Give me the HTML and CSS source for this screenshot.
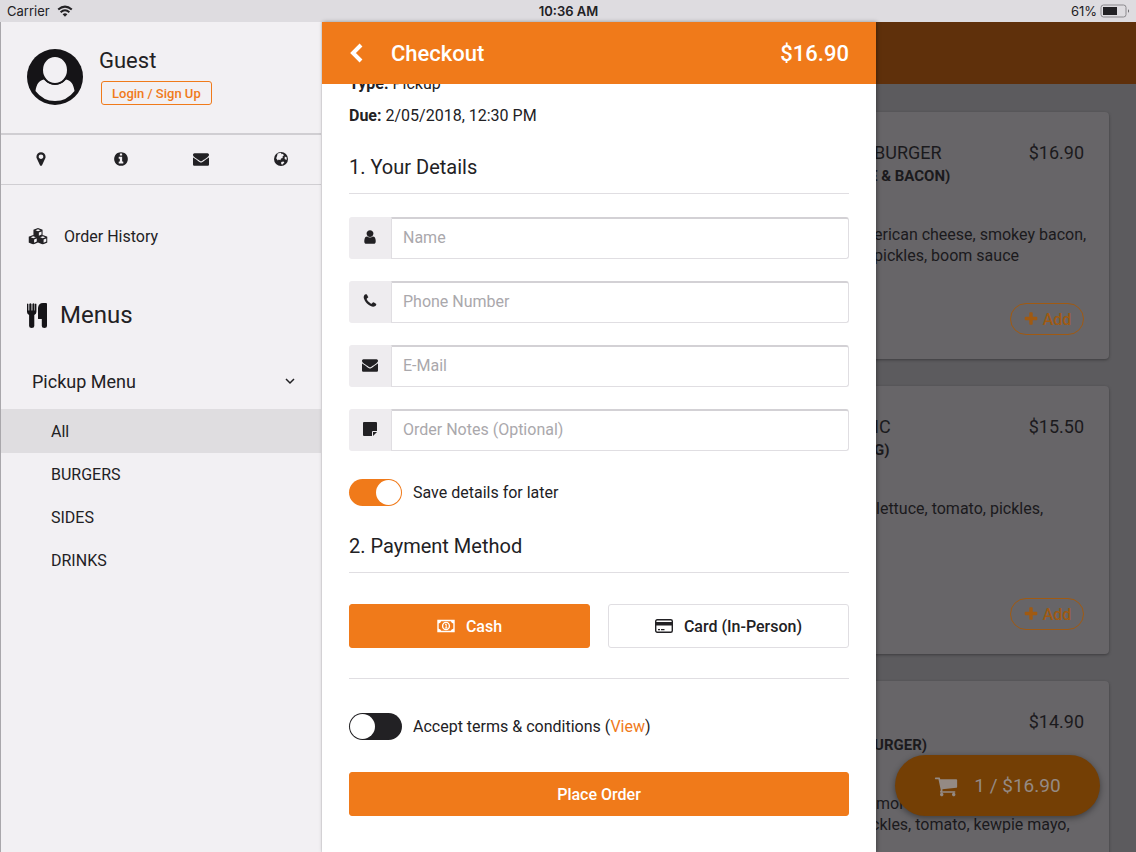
FILE: index.html
```
<!DOCTYPE html>
<html lang="en">
<head>
<meta charset="utf-8">
<meta name="viewport" content="width=device-width, initial-scale=1">
<title>Checkout</title>
<link rel="stylesheet" href="styles.css">
</head>
<body>
<svg class="sprite" aria-hidden="true">
  <symbol id="marker" viewBox="0 0 1792 1792"><path d="M1152 640q0-106-75-181t-181-75-181 75-75 181 75 181 181 75 181-75 75-181zm256 0q0 109-33 179l-364 774q-16 33-47.5 52t-67.5 19-67.5-19-46.5-52l-365-774q-33-70-33-179 0-212 150-362t362-150 362 150 150 362z"/></symbol>
  <symbol id="info" viewBox="0 0 1792 1792"><path d="M1152 1376v-160q0-14-9-23t-23-9h-96v-512q0-14-9-23t-23-9h-320q-14 0-23 9t-9 23v160q0 14 9 23t23 9h96v320h-96q-14 0-23 9t-9 23v160q0 14 9 23t23 9h448q14 0 23-9t9-23zm-128-896v-160q0-14-9-23t-23-9h-192q-14 0-23 9t-9 23v160q0 14 9 23t23 9h192q14 0 23-9t9-23zm640 416q0 209-103 385.5t-279.5 279.5-385.5 103-385.5-103-279.5-279.5-103-385.5 103-385.5 279.5-279.5 385.5-103 385.5 103 279.5 279.5 103 385.5z"/></symbol>
  <symbol id="mail" viewBox="0 0 1792 1792"><path d="M1792 710v794q0 66-47 113t-113 47h-1472q-66 0-113-47t-47-113v-794q44 49 101 87 362 246 497 345 57 42 92.5 65.5t94.5 48 110 24.5h2q51 0 110-24.5t94.5-48 92.5-65.5q170-123 498-345 57-39 100-87zm0-294q0 79-49 151t-122 123q-376 261-468 325-10 7-42.5 31t-54 38.5-52 32.5-57.5 27-50 9h-2q-23 0-50-9t-57.5-27-52-32.5-54-38.5-42.5-31q-91-64-262-182.5t-205-142.5q-62-42-117-115.5t-55-136.5q0-78 41.5-130t118.5-52h1472q65 0 112.5 47t47.5 113z"/></symbol>
  <symbol id="globe" viewBox="0 0 16 16"><circle cx="8" cy="8" r="7"/><path class="cut" d="M4.600 2.600 8 1.800 8.600 3.200 10 2.800 10.800 4.400 9.400 5.800 9.800 7 8 7.600 7.400 9.200 5.800 8.400 4.800 9.400 3.200 7.200 4.200 4.600zM11.800 5.600 13.800 6.400 13.600 9 11.600 8zM8.200 11 10.400 10.400 11.400 11.600 9.200 13.800 8.200 13z"/></symbol>
  <symbol id="user" viewBox="0 0 1792 1792"><path d="M1536 1399q0 109-62.5 187t-150.5 78h-854q-88 0-150.5-78t-62.5-187q0-85 8.5-160.5t31.5-152 58.5-131 94-89 134.5-34.5q131 128 313 128t313-128q76 0 134.5 34.5t94 89 58.5 131 31.5 152 8.5 160.5zm-256-887q0 159-112.5 271.5t-271.5 112.5-271.5-112.5-112.5-271.5 112.5-271.5 271.5-112.5 271.5 112.5 112.5 271.5z"/></symbol>
  <symbol id="phone" viewBox="0 0 1792 1792"><path d="M1600 1240q0 27-10 70.5t-21 68.5q-21 50-122 106-94 51-186 51-27 0-53-3.5t-57.5-12.5-47-14.5-55.5-20.5-49-18q-98-35-175-83-127-79-264-216t-216-264q-48-77-83-175-3-9-18-49t-20.5-55.5-14.5-47-12.5-57.5-3.5-53q0-92 51-186 56-101 106-122 25-11 68.5-21t70.5-10q14 0 21 3 18 6 53 76 11 19 30 54t35 63.5 31 53.5q3 4 17.5 25t21.5 35.5 7 28.5q0 20-28.5 50t-62 55-62 53-28.5 46q0 9 5 22.5t8.5 20.5 14 24 11.5 19q76 137 174 235t235 174q2 1 19 11.5t24 14 20.5 8.5 22.5 5q18 0 46-28.5t53-62 55-62 50-28.5q14 0 28.5 7t35.5 21.5 25 17.5q25 15 53.5 31t63.5 35 54 30q70 35 76 53 3 7 3 21z"/></symbol>
  <symbol id="note" viewBox="0 0 16 16"><path d="M2 1h12q1 0 1 1v8h-4q-1 0-1 1v4H2q-1 0-1-1V2q0-1 1-1zM11 11h4l-4 4z"/></symbol>
  <symbol id="cart" viewBox="0 0 1792 1792"><path d="M704 1536q0 52-38 90t-90 38-90-38-38-90 38-90 90-38 90 38 38 90zm896 0q0 52-38 90t-90 38-90-38-38-90 38-90 90-38 90 38 38 90zm128-1088v512q0 24-16.500 42.500t-40.500 21.500l-1044 122q13 60 13 70 0 16-24 64h920q26 0 45 19t19 45-19 45-45 19h-1024q-26 0-45-19t-19-45q0-11 8-31.500t16-36 21.500-40 15.500-29.500l-177-823h-204q-26 0-45-19t-19-45 19-45 45-19h256q16 0 28.500 6.500t19.500 15.500 13 24.500 8 26 5.500 29.500 4.500 26h1201q26 0 45 19t19 45z"/></symbol>
  <symbol id="plus" viewBox="0 0 1792 1792"><path d="M1600 736v192q0 40-28 68t-68 28h-416v416q0 40-28 68t-68 28h-192q-40 0-68-28t-28-68v-416h-416q-40 0-68-28t-28-68v-192q0-40 28-68t68-28h416v-416q0-40 28-68t68-28h192q40 0 68 28t28 68v416h416q40 0 68 28t28 68z"/></symbol>
  <symbol id="cube" viewBox="0 0 10 10"><path d="M5 0 10 1.800v6L5 10 0 7.800v-6z"/><path class="cut" d="M5 1.300 7.700 2.300 5 3.300 2.300 2.300zM5.900 4.800 8.700 3.600v3.200L5.900 8.100z"/></symbol>
</svg>

<header class="status">
  <span class="status-left">Carrier
    <svg class="wifi" viewBox="0 0 16 12" aria-hidden="true"><path d="M1.200 4.600Q8-1.400 14.800 4.600M3.600 7.200Q8 3.400 12.400 7.200"/><path class="wifi-dot" d="M5.600 9.200Q8 7.300 10.400 9.200L8 11.700z"/></svg>
  </span>
  <strong>10:36 AM</strong>
  <span class="status-right">61%
    <svg class="battery" viewBox="0 0 30 14" aria-hidden="true"><rect class="battery-case" x="1" y="1" width="25" height="12" rx="2.500"/><rect x="3" y="3" width="14" height="8"/><path d="M28 5v4q1.500-2 0-4"/></svg>
  </span>
</header>

<div class="app">
  <aside class="sidebar">
    <section class="profile">
      <svg class="avatar" viewBox="0 0 56 56" aria-hidden="true"><circle cx="28" cy="28" r="28"/><path class="cut" d="M8.500 42C9.500 35 12 31.500 17 30.500q4.500 5 11 5t11-5C44 31.500 46.500 35 47.500 42Q40 52 28 52T8.500 42z"/><ellipse class="cut head" cx="28" cy="21" rx="13" ry="14"/></svg>
      <div class="who">
        <h2>Guest</h2>
        <button class="login" type="button">Login / Sign Up</button>
      </div>
    </section>
    <nav class="quick" aria-label="Information">
      <a href="#location" aria-label="Location"><svg class="icon"><use href="#marker"/></svg></a>
      <a href="#about" aria-label="About"><svg class="icon"><use href="#info"/></svg></a>
      <a href="#contact" aria-label="Contact"><svg class="icon"><use href="#mail"/></svg></a>
      <a href="#website" aria-label="Website"><svg class="icon"><use href="#globe"/></svg></a>
    </nav>
    <a class="history" href="#history">
      <svg class="cubes" viewBox="0 0 20 17" aria-hidden="true"><use href="#cube" x="5.250" y="0" width="9.500" height="9.500"/><use href="#cube" x="0.500" y="7" width="9.500" height="9.500"/><use href="#cube" x="10" y="7" width="9.500" height="9.500"/></svg>
      Order History
    </a>
    <h2 class="menus">
      <svg class="utensils" viewBox="0 0 21 25" aria-hidden="true"><path d="M0 1Q.7-.2 1.400 1V7.500H2.300V1Q3.400-.4 4.500 1V7.500H5.400V1Q6.500-.4 7.500 1V7.500H8V1Q8.800-.2 9.400 1V9Q9.400 11 7.300 12V23Q7.300 25 4.700 25T2.100 23V12Q0 11 0 9zM20 1V23Q20 25 17.400 25T14.800 23V16H11.500Q11 16 11 15.500V5Q11.500 0 16 0H19Q20 0 20 1z"/></svg>
      Menus
    </h2>
    <button class="group" type="button" aria-expanded="true">Pickup Menu
      <svg class="chevron" viewBox="0 0 10 7" aria-hidden="true"><path d="M1 1l4 4 4-4"/></svg>
    </button>
    <nav class="categories" aria-label="Pickup Menu">
      <a class="active" href="#all">All</a>
      <a href="#burgers">BURGERS</a>
      <a href="#sides">SIDES</a>
      <a href="#drinks">DRINKS</a>
    </nav>
  </aside>

  <main class="drawer">
    <header class="drawer-head">
      <button class="back" type="button" aria-label="Back"><svg viewBox="0 0 14 20" aria-hidden="true"><path d="M12 2 4 10l8 8"/></svg></button>
      <h1>Checkout</h1>
      <span>$16.90</span>
    </header>
    <form class="form">
      <p class="meta meta-first"><b>Type:</b> Pickup</p>
      <p class="meta"><b>Due:</b> 2/05/2018, 12:30 PM</p>
      <h2>1. Your Details</h2>
      <div class="fields">
        <div class="field"><label for="name" aria-label="Name"><svg class="icon"><use href="#user"/></svg></label><input id="name" type="text" placeholder="Name"></div>
        <div class="field"><label for="tel" aria-label="Phone Number"><svg class="icon"><use href="#phone"/></svg></label><input id="tel" type="tel" placeholder="Phone Number"></div>
        <div class="field"><label for="email" aria-label="E-Mail"><svg class="icon"><use href="#mail"/></svg></label><input id="email" type="email" placeholder="E-Mail"></div>
        <div class="field"><label for="notes" aria-label="Order Notes"><svg class="icon"><use href="#note"/></svg></label><input id="notes" type="text" placeholder="Order Notes (Optional)"></div>
      </div>
      <div class="switch-row"><input class="switch" id="save" type="checkbox" checked><label for="save">Save details for later</label></div>
      <h2>2. Payment Method</h2>
      <div class="payment">
        <button class="btn primary" type="button"><svg class="pay-icon" viewBox="0 0 18 14" aria-hidden="true"><path class="line" d="M1 1.500h16v11H1z"/><path d="M1 1.500h3.500Q4 4 1 4.500zM17 1.500v3Q14 4 13.500 1.500zM1 9.500q3 .5 3.500 3H1zM17 9.500v3h-3.500q.5-2.500 3.500-3z"/><ellipse class="line" cx="9" cy="7" rx="3.400" ry="3.600"/><path class="line thin" d="M8 5.500 9.200 5v4M7.800 9h2.700"/></svg>Cash</button>
        <button class="btn outline" type="button"><svg class="pay-icon" viewBox="0 0 18 14" aria-hidden="true"><rect class="line" x=".7" y=".7" width="16.600" height="12.600" rx="1.500"/><path d="M1 3h16v3.500H1zM3 10h2v1.200H3zM6 10h3.500v1.200H6z"/></svg>Card (In-Person)</button>
      </div>
      <hr>
      <div class="switch-row terms"><input class="switch" id="terms" type="checkbox"><span><label for="terms">Accept terms &amp; conditions</label> (<a href="#terms-text">View</a>)</span></div>
      <button class="btn primary place" type="submit">Place Order</button>
    </form>
  </main>

  <section class="menu" aria-label="Menu items">
    <div class="menu-head"></div>
    <div class="cards">
      <article class="card">
        <header><h3>BURGER</h3><span>$16.90</span></header>
        <h4 class="bleed">E &amp; BACON)</h4>
        <p>erican cheese, smokey bacon,<br>pickles, boom sauce</p>
        <button class="add" type="button"><svg><use href="#plus"/></svg>Add</button>
      </article>
      <article class="card">
        <header><h3>IC</h3><span>$15.50</span></header>
        <h4>G)</h4>
        <p class="tall">lettuce, tomato, pickles,</p>
        <button class="add" type="button"><svg><use href="#plus"/></svg>Add</button>
      </article>
      <article class="card">
        <header><h3></h3><span>$14.90</span></header>
        <h4>URGER)</h4>
        <p class="tall">mor<br><span class="bleed">ckles, tomato, kewpie mayo,</span></p>
      </article>
    </div>
    <button class="basket" type="button"><svg><use href="#cart"/></svg>1 / $16.90</button>
  </section>
</div>
</body>
</html>
```
FILE: styles.css
```
:root {
  --orange: #f07a1a;
  --ink: #222124;
  --panel: #f2f0f3;
  --line: #e0dee2;
}

* { box-sizing: border-box; }

body {
  margin: 0;
  height: 100vh;
  display: flex;
  flex-direction: column;
  overflow: hidden;
  font-family: Roboto, sans-serif;
  font-size: 16px;
  color: var(--ink);
  background: var(--panel);
}

h1, h2, h3, h4, p { margin: 0; font-weight: 400; }
a { color: inherit; text-decoration: none; }
button, input { font: inherit; color: inherit; }
button { cursor: pointer; padding: 0; border: 0; background: none; }
svg { display: block; fill: currentColor; }

.sprite { position: absolute; width: 0; height: 0; }
.cut { fill: var(--panel); }
.icon { width: 16px; height: 16px; }

.status {
  flex: none;
  display: grid;
  grid-template-columns: 1fr auto 1fr;
  align-items: center;
  height: 22px;
  padding: 0 6px 0 7px;
  background: #dedce0;
  font-family: Inter, sans-serif;
  font-size: 13px;
}
.status strong { font-weight: 600; }
.status-left, .status-right { display: flex; align-items: center; gap: 7px; }
.status-right { justify-content: flex-end; gap: 3px; }
.wifi { width: 16px; height: 12px; fill: none; stroke: currentColor; stroke-width: 2; }
.wifi-dot { fill: currentColor; stroke: none; }
.battery { width: 30px; height: 14px; }
.battery-case { fill: none; stroke: #8b898d; }

.app {
  flex: 1;
  min-height: 0;
  display: grid;
  grid-template-columns: 322px minmax(0, 554fr) minmax(0, 260fr);
}

.sidebar {
  border-left: 1px solid #a9a7ab;
  border-right: 1px solid #e6e4e8;
  background: var(--panel);
}
.profile {
  display: flex;
  gap: 18px;
  height: 113px;
  padding: 27px 26px 0;
  border-bottom: 2px solid #d0ced2;
}
.avatar { width: 56px; height: 56px; fill: #151417; }
.head { stroke: #151417; stroke-width: 2; }
.who { display: flex; flex-direction: column; align-items: flex-start; gap: 7px; }
.who h2 { margin: -1px 0 0 -2px; font-size: 22px; line-height: 26px; }
.login {
  height: 24px;
  padding: 0 10px;
  border: 1px solid var(--orange);
  border-radius: 3px;
  color: var(--orange);
  font-size: 13px;
  font-weight: 500;
}
.quick {
  display: grid;
  grid-template-columns: repeat(4, 1fr);
  height: 50px;
  padding-bottom: 2px;
  border-bottom: 1px solid #d0ced2;
}
.quick a { display: grid; place-items: center; }
.history { display: flex; align-items: center; gap: 16px; height: 40px; margin-top: 31px; padding-left: 27px; }
.cubes { width: 20px; height: 17px; }
.menus { display: flex; align-items: center; gap: 12px; height: 40px; margin-top: 39px; padding-left: 26px; font-size: 24px; }
.utensils { width: 21px; height: 25px; fill: #151417; }
.group {
  display: flex;
  align-items: center;
  justify-content: space-between;
  width: 100%;
  height: 54px;
  margin-top: 20px;
  padding: 0 26px 1px 31px;
  font-size: 18px;
}
.chevron { width: 10px; height: 7px; fill: none; stroke: currentColor; stroke-width: 1.5; }
.categories a { display: flex; align-items: center; height: 43px; padding-left: 50px; }
.categories .active { height: 44px; background: #dfdde0; }

.drawer {
  position: relative;
  z-index: 1;
  display: flex;
  flex-direction: column;
  min-height: 0;
  background: #fff;
  box-shadow: 1px 0 4px rgba(0, 0, 0, .35);
}
.drawer-head {
  position: relative;
  flex: none;
  display: flex;
  align-items: center;
  height: 62px;
  padding: 0 27px;
  background: var(--orange);
  color: #fff;
  font-size: 22px;
  font-weight: 500;
}
.drawer-head h1 { flex: 1; margin-left: 28px; font-size: 22px; font-weight: 500; }
.back svg { width: 14px; height: 20px; fill: none; stroke: #fff; stroke-width: 4; }

.form { flex: 1; min-height: 0; overflow: hidden; padding: 0 27px; }
.meta { line-height: 32px; }
.meta-first { margin-top: -16px; }
.meta b { font-weight: 700; }
.form h2 {
  margin-top: 23px;
  padding-bottom: 14px;
  border-bottom: 1px solid var(--line);
  font-size: 20px;
  line-height: 24px;
}
.fields { display: grid; gap: 22px; margin-top: 23px; }
.field { display: flex; height: 42px; }
.field label {
  flex: none;
  display: grid;
  place-items: center;
  width: 42px;
  padding-bottom: 2px;
  border-radius: 3px 0 0 3px;
  background: #eeecef;
}
.field input {
  flex: 1;
  min-width: 0;
  padding: 0 11px 2px;
  border: 1px solid var(--line);
  border-top: 2px solid #d3d1d5;
  border-radius: 0 3px 3px 0;
  background: #fff;
}
.field input::placeholder { color: #aaa8ac; opacity: 1; }

.switch-row { display: flex; align-items: center; gap: 11px; height: 28px; margin-top: 27px; }
.switch {
  appearance: none;
  flex: none;
  display: flex;
  width: 53px;
  height: 27px;
  margin: 0;
  padding: 1px;
  border-radius: 14px;
  background: var(--ink);
}
.switch::before { content: ""; width: 25px; height: 25px; border-radius: 50%; background: #fff; }
.switch:checked { justify-content: flex-end; background: var(--orange); }
.switch-row + h2 { margin-top: 28px; }
.payment { display: grid; grid-template-columns: 1fr 1fr; gap: 18px; margin-top: 31px; }
.btn {
  display: flex;
  align-items: center;
  justify-content: center;
  gap: 11px;
  height: 44px;
  border: 1px solid var(--line);
  border-radius: 3px;
  font-weight: 500;
}
.btn.primary { border-color: var(--orange); background: var(--orange); color: #fff; }
.pay-icon { width: 18px; height: 14px; }
.line { fill: none; stroke: currentColor; stroke-width: 1.4; }
.thin { stroke-width: 1; }
.form hr { margin: 30px 0 0; border: 0; border-top: 1px solid var(--line); }
.terms { margin-top: 33px; }
.terms a { color: var(--orange); }
.place { width: 100%; margin-top: 32px; }

.menu {
  position: relative;
  min-height: 0;
  overflow: hidden;
  background: #5c5b5e;
  color: #1b1a1d;
}
.menu-head { height: 62px; background: #5f300b; }
.cards { display: grid; grid-template-columns: minmax(0, 1fr); gap: 27px; padding: 28px 27px 0 0; }
.card {
  display: flex;
  flex-direction: column;
  margin-left: -8px;
  padding: 28px 25px 24px 6px;
  border-radius: 4px;
  background: #676568;
  box-shadow: 0 1px 3px rgba(0, 0, 0, .35);
  white-space: nowrap;
}
.card header { display: flex; justify-content: space-between; font-size: 18px; line-height: 26px; }
.card h3 { font-size: 18px; }
.card h4 { font-size: 15px; font-weight: 700; line-height: 20px; }
.card .bleed { margin-left: -5px; }
.card p { margin-top: 38px; line-height: 21px; }
.card .tall { min-height: 63px; padding-left: 2px; }
.add {
  align-self: flex-end;
  display: flex;
  align-items: center;
  justify-content: center;
  gap: 4px;
  width: 74px;
  height: 32px;
  margin-top: 37px;
  border: 1px solid #a05a12;
  border-radius: 16px;
  color: #a05a12;
  font-weight: 500;
}
.add svg { width: 16px; height: 16px; }
.basket {
  position: absolute;
  right: 36px;
  bottom: 36px;
  display: flex;
  align-items: center;
  justify-content: center;
  gap: 16px;
  width: 205px;
  height: 61px;
  border-radius: 31px;
  background: #743f05;
  color: #948a84;
  font-size: 19px;
  box-shadow: 0 2px 6px rgba(0, 0, 0, .4);
}
.basket svg { width: 24px; height: 24px; }
```
